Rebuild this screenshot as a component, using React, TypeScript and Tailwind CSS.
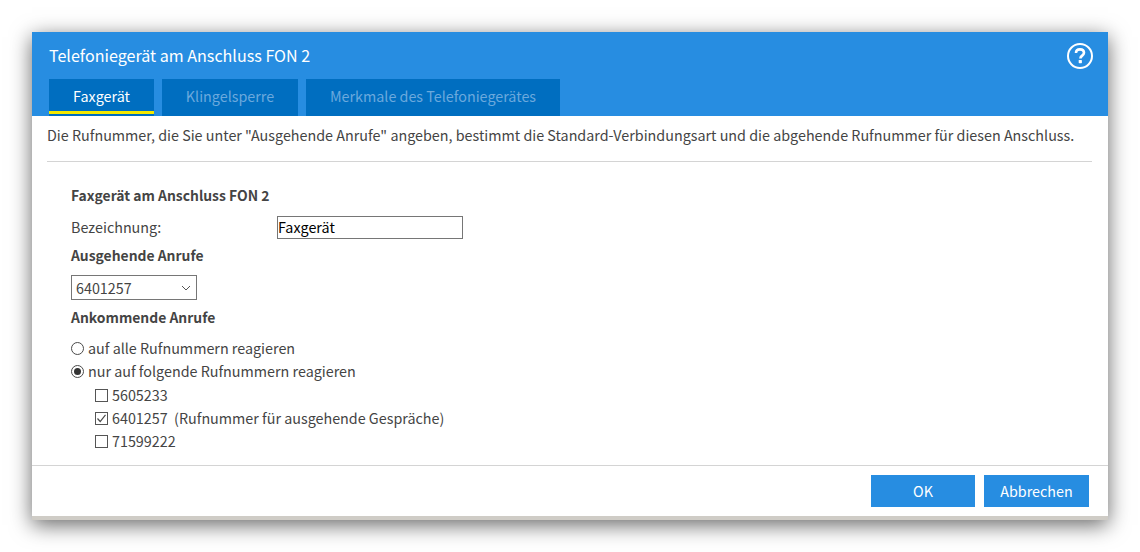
import React from "react";

function Check({ checked = false }: { checked?: boolean }) {
  return (
    <span className="w-[13px] h-[13px] translate-y-[1px] border border-[#555] bg-white mr-[4px] shrink-0 flex items-center justify-center">
      {checked && (
        <svg width="11" height="11" viewBox="0 0 11 11" fill="none">
          <path d="M1.5 5.5 L4.2 8.5 L9.5 1.8" stroke="#4a4a4a" strokeWidth="1.2" />
        </svg>
      )}
    </span>
  );
}

function Radio({ checked = false }: { checked?: boolean }) {
  return (
    <span className="w-[13px] h-[13px] translate-y-[1px] rounded-full border border-[#4a4a4a] bg-white mr-[4px] shrink-0 flex items-center justify-center">
      {checked && <span className="w-[7px] h-[7px] rounded-full bg-[#333]" />}
    </span>
  );
}

export default function App() {
  return (
    <div className="w-[1140px] h-[552px] bg-white pt-[32px] px-[32px] overflow-hidden font-['Noto_Sans_CJK_JP',sans-serif] text-[14.33px] text-[#444]">
      <div className="w-[1076px] h-[488px] bg-white flex flex-col shadow-[0_5px_20px_rgba(0,0,0,0.6)] border-b-[4px] border-b-[#cfccc6]">
        <div className="h-[84px] bg-[#278de1] px-[17px] relative flex flex-col shrink-0">
          <div className="h-[47px] pt-[11px] text-[16.1px] leading-[24px] text-white">Telefoniegerät am Anschluss FON 2</div>
          <div className="flex gap-[8px]">
            <div className="w-[105px] h-[37px] bg-[#006ec0] text-white text-center leading-[34px] relative">
              Faxgerät
              <span className="absolute left-0 right-0 bottom-[2px] h-[3px] bg-[#f5e900]" />
            </div>
            <div className="w-[136px] h-[37px] bg-[#006ec0] text-[#6ba9dd] text-center leading-[34px]">Klingelsperre</div>
            <div className="w-[254px] h-[37px] bg-[#006ec0] text-[#6ba9dd] text-center leading-[34px]">Merkmale des Telefoniegerätes</div>
          </div>
          <svg className="absolute left-[1034px] top-[10px]" width="28" height="28" viewBox="0 0 28 28" fill="none">
            <circle cx="14" cy="14" r="12" stroke="#fff" strokeWidth="2" />
            <path d="M10 11 C10 8.6 11.8 7.4 14 7.4 C16.4 7.4 18 8.8 18 10.8 C18 13.6 14.4 13.6 14.4 16.4" stroke="#fff" strokeWidth="2.6" />
            <rect x="12.7" y="18" width="3.2" height="3.2" rx="0.6" fill="#fff" />
          </svg>
        </div>
        <div className="flex-1 pl-[15px] pr-[16px] flex flex-col">
          <p className="h-[46px] leading-[38px] border-b border-[#d4d4d4] whitespace-nowrap">
            Die Rufnummer, die Sie unter "Ausgehende Anrufe" angeben, bestimmt die Standard-Verbindungsart und die abgehende Rufnummer für diesen Anschluss.
          </p>
          <div className="pl-[24px] pt-[23px] flex flex-col">
            <div className="font-bold text-[13.9px] leading-[20px] h-[30px]">Faxgerät am Anschluss FON 2</div>
            <div className="flex items-center h-[24px]">
              <span className="w-[206px]">Bezeichnung:</span>
              <input
                readOnly
                value="Faxgerät"
                className="w-[186px] h-[23px] border border-[#767676] pb-[2px] text-[14.33px] text-black outline-none"
              />
            </div>
            <div className="font-bold text-[13.9px] leading-[20px] h-[20px] mt-[6px]">Ausgehende Anrufe</div>
            <div className="mt-[10px] w-[126px] h-[25px] border border-[#767676] flex items-center justify-between pl-[4px] pr-[4px]">
              <span>6401257</span>
              <svg width="12" height="12" viewBox="0 0 12 12" fill="none">
                <path d="M2 4 L6 8 L10 4" stroke="#555" strokeWidth="1" />
              </svg>
            </div>
            <div className="font-bold text-[13.9px] leading-[20px] h-[20px] mt-[7px]">Ankommende Anrufe</div>
            <div className="mt-[9px] flex flex-col leading-[23px]">
              <div className="flex items-center h-[23px]"><Radio />auf alle Rufnummern reagieren</div>
              <div className="flex items-center h-[23px]"><Radio checked />nur auf folgende Rufnummern reagieren</div>
              <div className="pl-[24px] flex flex-col">
                <div className="flex items-center h-[24px]"><Check />5605233</div>
                <div className="flex items-center h-[23px]"><Check checked />6401257&nbsp;&nbsp;(Rufnummer für ausgehende Gespräche)</div>
                <div className="flex items-center h-[23px]"><Check />71599222</div>
              </div>
            </div>
          </div>
        </div>
        <div className="h-[51px] border-t border-[#d4d4d4] flex justify-end items-start gap-[9px] pt-[9px] pr-[19px] shrink-0">
          <button className="w-[104px] h-[32px] bg-[#278de1] text-white text-[14.33px]">OK</button>
          <button className="w-[105px] h-[32px] bg-[#278de1] text-white text-[14.33px]">Abbrechen</button>
        </div>
      </div>
    </div>
  );
}
